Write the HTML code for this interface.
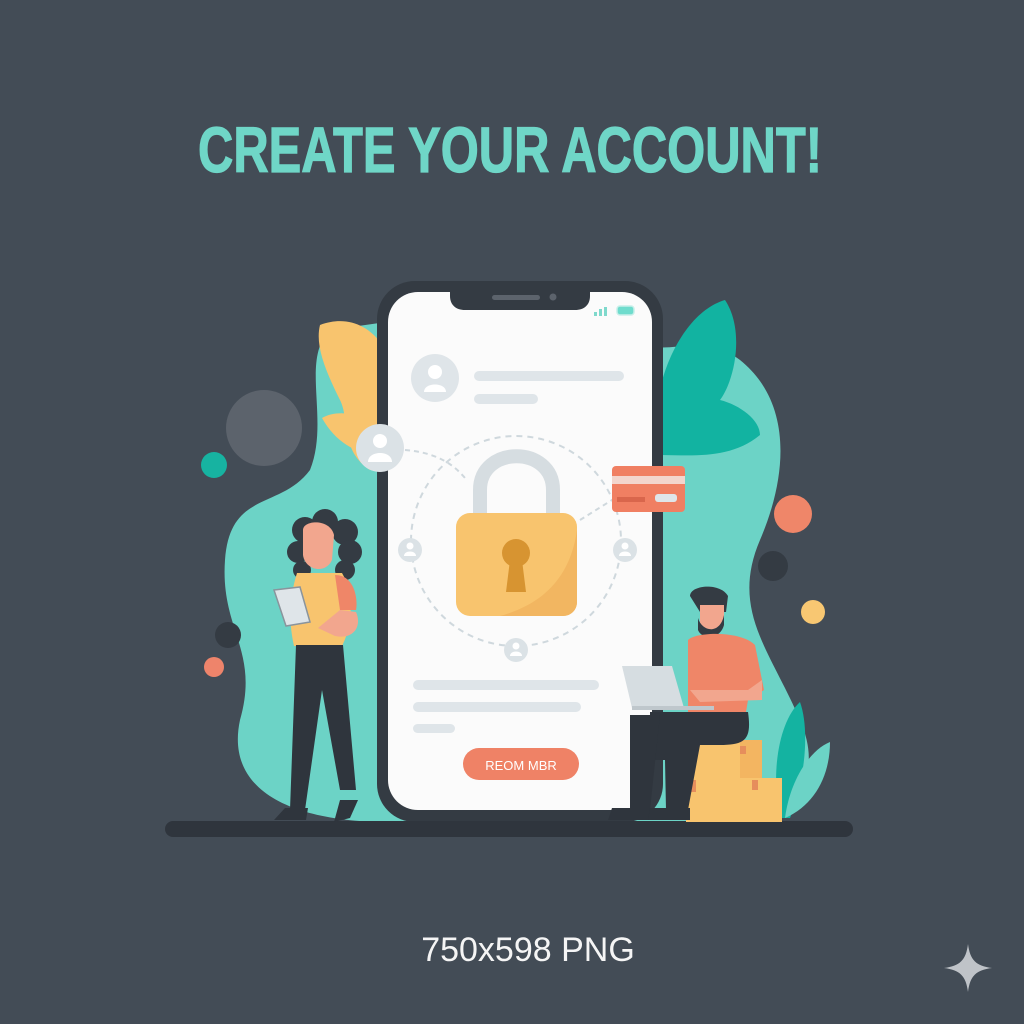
<!DOCTYPE html>
<html><head><meta charset="utf-8"><style>
html,body{margin:0;padding:0;background:#434c56;}
svg{display:block}
</style></head><body>
<svg width="1024" height="1024" viewBox="0 0 1024 1024" xmlns="http://www.w3.org/2000/svg">
<rect width="1024" height="1024" fill="#434c56"/>
<text x="198" y="172" font-family="Liberation Sans, sans-serif" font-weight="bold" font-size="64" fill="#6fd6c7" stroke="#6fd6c7" stroke-width="1.2" textLength="624" lengthAdjust="spacingAndGlyphs">CREATE YOUR ACCOUNT!</text>

<path d="M330 330 C300 360 330 420 310 470 C280 510 230 490 225 560 C220 630 260 650 240 720 C225 790 290 820 380 822 L700 822 C780 822 830 790 800 720 C770 650 730 610 760 540 C790 470 790 400 740 360 C700 330 660 360 640 340 L400 320 Z" fill="#6cd3c6"/>
<path d="M320 325 C360 310 395 340 400 400 C405 440 390 470 370 470 C340 450 350 420 340 400 C325 370 315 345 320 325Z" fill="#f8c46e"/>
<path d="M322 418 C345 405 385 420 395 450 C370 460 340 450 322 418Z" fill="#f8c46e"/>
<path d="M655 420 C660 360 690 310 725 300 C745 330 735 380 720 400 C740 405 760 420 760 435 C730 460 690 455 660 455Z" fill="#12b3a1"/>
<circle cx="264" cy="428" r="38" fill="#5c636c"/>
<circle cx="214" cy="465" r="13" fill="#17b3a1"/>
<circle cx="228" cy="635" r="13" fill="#343b43"/>
<circle cx="214" cy="667" r="10" fill="#ee846b"/>
<circle cx="793" cy="514" r="19" fill="#ef8669"/>
<circle cx="773" cy="566" r="15" fill="#343b43"/>
<circle cx="813" cy="612" r="12" fill="#f8c772"/>
<path d="M780 818 C770 770 780 720 800 702 C810 730 805 780 790 818Z" fill="#14b3a1"/>
<path d="M785 818 C790 780 810 750 830 742 C830 775 815 805 785 818Z" fill="#6cd3c6"/>

<rect x="377" y="281" width="286" height="541" rx="38" fill="#343b43"/>
<rect x="388" y="292" width="264" height="518" rx="30" fill="#fbfbfb"/>
<path d="M450 290 L590 290 L590 296 C590 305 584 310 575 310 L465 310 C456 310 450 305 450 296Z" fill="#343b43"/>
<rect x="492" y="295" width="48" height="5" rx="2.5" fill="#5c636c"/>
<circle cx="553" cy="297" r="3.5" fill="#5c636c"/>
<rect x="594" y="312" width="3" height="4" fill="#7fd9cc"/><rect x="599" y="309" width="3" height="7" fill="#7fd9cc"/><rect x="604" y="307" width="3" height="9" fill="#7fd9cc"/>
<rect x="617" y="306" width="17" height="9" rx="3" fill="#6fdccd" stroke="#c8efe9" stroke-width="1.5"/>
<circle cx="435" cy="378" r="24" fill="#dfe5e9"/>
<circle cx="435" cy="372" r="7" fill="#fff"/><path d="M424 392 C424 382 446 382 446 392Z" fill="#fff"/>
<rect x="474" y="371" width="150" height="10" rx="5" fill="#dfe5e9"/>
<rect x="474" y="394" width="64" height="10" rx="5" fill="#dfe5e9"/>
<circle cx="516" cy="541" r="105" fill="none" stroke="#cfd8dd" stroke-width="2" stroke-dasharray="6 5"/>
<path d="M405 450 C430 452 450 460 465 478" fill="none" stroke="#cfd8dd" stroke-width="2" stroke-dasharray="5 4"/>
<path d="M580 520 L612 500" fill="none" stroke="#cfd8dd" stroke-width="2" stroke-dasharray="5 4"/>
<path d="M480 515 L480 490 C480 445 553 445 553 490 L553 515" fill="none" stroke="#d6dde1" stroke-width="14"/>
<rect x="456" y="513" width="121" height="103" rx="14" fill="#f8c46e"/>
<path d="M577 530 C570 580 540 605 500 616 L563 616 C571 616 577 610 577 602Z" fill="#f2b661"/>
<circle cx="516" cy="553" r="14" fill="#d79431"/>
<path d="M510 560 L522 560 L526 592 L506 592Z" fill="#d79431"/>
<g fill="#dbe2e6"><circle cx="380" cy="448" r="24"/><circle cx="410" cy="550" r="12"/><circle cx="625" cy="550" r="12"/><circle cx="516" cy="650" r="12"/></g>
<g fill="#fff"><circle cx="380" cy="441" r="7"/><path d="M368 462 C368 450 392 450 392 462Z"/>
<circle cx="410" cy="546" r="3.5"/><path d="M404 556 C404 550 416 550 416 556Z"/>
<circle cx="625" cy="546" r="3.5"/><path d="M619 556 C619 550 631 550 631 556Z"/>
<circle cx="516" cy="646" r="3.5"/><path d="M510 656 C510 650 522 650 522 656Z"/></g>
<rect x="612" y="466" width="73" height="46" rx="4" fill="#f07f62"/>
<rect x="612" y="476" width="73" height="8" fill="#f3d5cc"/>
<rect x="617" y="497" width="28" height="5" fill="#d9664c"/>
<rect x="655" y="494" width="22" height="8" rx="3" fill="#dfe5e9"/>
<rect x="413" y="680" width="186" height="10" rx="5" fill="#dfe5e9"/>
<rect x="413" y="702" width="168" height="10" rx="5" fill="#dfe5e9"/>
<rect x="413" y="724" width="42" height="9" rx="4.5" fill="#dfe5e9"/>
<rect x="463" y="748" width="116" height="32" rx="16" fill="#ef8266"/>
<text x="521" y="770" text-anchor="middle" font-family="Liberation Sans, sans-serif" font-size="13" fill="#fff">REOM MBR</text>

<rect x="165" y="821" width="688" height="16" rx="8" fill="#2f353d"/>

<!-- woman -->
<g fill="#343b43"><circle cx="305" cy="530" r="13"/><circle cx="325" cy="522" r="13"/><circle cx="345" cy="532" r="13"/><circle cx="298" cy="552" r="11"/><circle cx="350" cy="552" r="12"/><circle cx="302" cy="570" r="9"/><circle cx="345" cy="570" r="10"/></g>
<path d="M303 530 C303 520 330 518 334 535 L332 560 C325 575 305 570 303 555Z" fill="#f2a68e"/>
<path d="M297 573 L342 573 C352 590 355 620 342 646 L294 646 C288 620 290 595 297 573Z" fill="#f8c46e"/>
<path d="M335 575 C355 575 358 600 356 610 L340 610Z" fill="#ef8668"/>
<path d="M296 645 L343 645 L356 790 L340 790 L322 690 L305 810 L290 810 Z" fill="#2f353d"/>
<path d="M285 808 L308 808 L306 820 L274 820 Z" fill="#2f353d"/>
<path d="M340 800 L358 800 L350 818 L334 822 Z" fill="#2f353d"/>
<path d="M274 590 L300 587 L310 622 L286 626 Z" fill="#dfe5e9" stroke="#8a949c" stroke-width="1.5"/>
<path d="M340 610 L356 612 C362 625 355 640 335 636 L318 628 Z" fill="#f2a68e"/>

<!-- man + boxes -->
<rect x="686" y="740" width="76" height="40" fill="#f8c46e"/>
<rect x="740" y="740" width="22" height="40" fill="#f3b561"/>
<rect x="686" y="778" width="96" height="44" fill="#f8c46e"/>
<rect x="740" y="746" width="6" height="8" fill="#e68e5c"/><rect x="690" y="780" width="6" height="12" fill="#e68e5c"/><rect x="752" y="780" width="6" height="10" fill="#e68e5c"/>
<path d="M690 596 C690 585 720 582 728 596 L726 612 L700 612 Z" fill="#343b43"/>
<path d="M700 605 L724 605 L724 625 C722 635 706 636 700 628Z" fill="#f2a68e"/>
<path d="M698 618 C702 632 720 635 724 615 L724 625 C720 640 702 640 698 630Z" fill="#343b43"/>
<path d="M688 640 C695 632 740 630 755 645 L764 690 L748 700 L746 712 L688 712 Z" fill="#ef8668"/>
<path d="M650 712 L748 712 C752 740 745 745 720 745 L700 745 L688 810 L666 810 L665 760 L650 760 Z" fill="#2f353d"/>
<path d="M630 715 L660 715 L650 810 L630 810 Z" fill="#2f353d"/>
<path d="M612 808 L650 808 L650 820 L608 820Z" fill="#2f353d"/>
<path d="M650 808 L690 808 L690 820 L648 820Z" fill="#2f353d"/>
<path d="M622 666 L672 666 L684 708 L632 708 Z" fill="#d6dde1"/>
<rect x="632" y="706" width="82" height="4" fill="#bfc7cc"/>
<path d="M690 690 L748 690 L762 680 L762 700 L700 702 Z" fill="#f2a68e"/>

<text x="528" y="961" text-anchor="middle" font-family="Liberation Sans, sans-serif" font-size="34" fill="#f5f5f5">750x598 PNG</text>
<path d="M968 944 C970 960 976 966 992 968 C976 970 970 976 968 992 C966 976 960 970 944 968 C960 966 966 960 968 944Z" fill="#bfc3c8"/>
</svg>
</body></html>
